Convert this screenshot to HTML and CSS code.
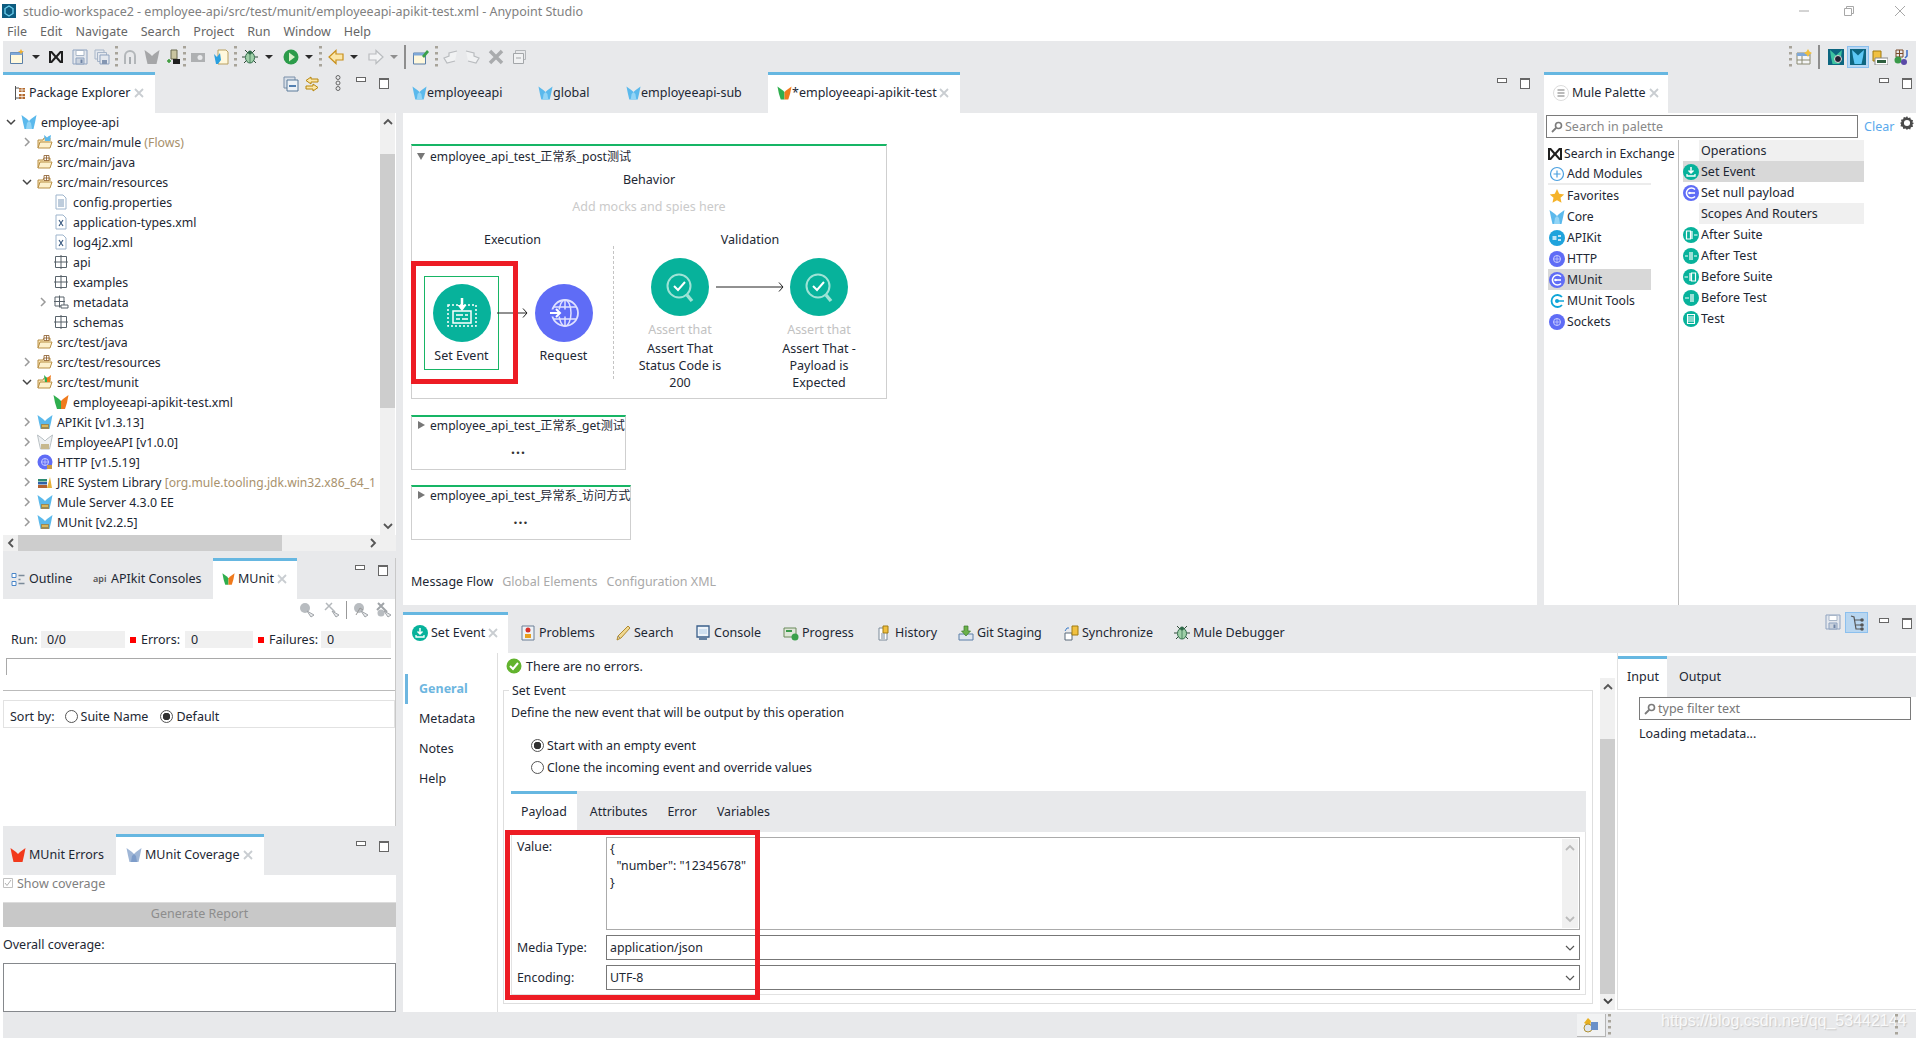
FILE: index.html

```html
<!DOCTYPE html>
<html lang="en">
  <head>
    <meta charset="UTF-8" />
    <meta name="viewport" content="width=device-width, initial-scale=1.0" />
    <title>Anypoint Studio</title>
    <link rel="stylesheet" href="styles.css">
  </head>
  <body>
    <!-- shared icons -->
    <svg class="sprite" xmlns="http://www.w3.org/2000/svg">
      <symbol id="mule" viewBox="0 0 16 16"><path d="M.5 1l5.500 4 2 2 2-2 5.500-4-1.500 7.500-1.500 6.500h-9L2 8.500z" fill="#5bb9ec"/><path d="M5 15l1-6 2-2 2 2 1 6z" fill="#93d5f6"/></symbol>
      <symbol id="mule-lib" viewBox="0 0 16 16"><path d="M.5 1l5.500 4 2 2 2-2 5.500-4-1.500 7.500-1.500 6.500h-9L2 8.500z" fill="#5bb9ec"/><path d="M4 10h8v5H4z" fill="#9c8a56"/><path d="M5 11h6v2H5z" fill="#d9b75a"/></symbol>
      <symbol id="mule-pale" viewBox="0 0 16 16"><path d="M.5 1l5.500 4 2 2 2-2 5.500-4-1.500 7.500-1.500 6.500h-9L2 8.500z" fill="#eef0f2" stroke="#a9b2b8" stroke-width=".8"/><path d="M4 10h8v5H4z" fill="#c7b88e"/></symbol>
      <symbol id="mule-cov" viewBox="0 0 16 16"><path d="M.5 1l5.500 4 2 2 2-2 5.500-4-1.500 7.500-1.500 6.500h-9L2 8.500z" fill="#9fb6d6"/><path d="M5 15l1-6 2-2 2 2 1 6z" fill="#7d9cc9"/></symbol>
      <symbol id="mule-red" viewBox="0 0 16 16"><path d="M.5 1l5.500 4 2 2 2-2 5.500-4-1.500 7.500-1.500 6.500h-9L2 8.500z" fill="#f23a1c"/></symbol>
      <symbol id="mule-gray" viewBox="0 0 16 16"><path d="M.5 1l5.500 4 2 2 2-2 5.500-4-1.500 7.500-1.500 6.500h-9L2 8.500z" fill="#a5a6a8"/></symbol>
      <symbol id="munit" viewBox="0 0 16 16"><path d="M.5 1l5.500 4 2 2v8H4L2 8.500z" fill="#2fae4e"/><path d="M15.500 1l-5.500 4-2 2v8h4l2-6.500z" fill="#f07a1c"/></symbol>
      <symbol id="x" viewBox="0 0 10 10"><path d="M1 1l8 8M9 1l-8 8" stroke="#c9cdd1" stroke-width="1.800" fill="none"/></symbol>
      <symbol id="arrow-r" viewBox="0 0 10 10"><path d="M3 1l4 4-4 4" stroke="#9a9a9a" stroke-width="1.500" fill="none"/></symbol>
      <symbol id="arrow-d" viewBox="0 0 10 10"><path d="M1 3l4 4 4-4" stroke="#444" stroke-width="1.500" fill="none"/></symbol>
      <symbol id="folder-pkg" viewBox="0 0 16 16"><path d="M1 14V6h5l1-2h6v3" fill="#fbe7b8" stroke="#b88f45"/><path d="M1 14l2-6h12l-2 6z" fill="#fdf0cc" stroke="#b88f45"/><path d="M7 1.500h5v5H7zM9.500 1.500v5M7 4h5" fill="#fff" stroke="#8a5a2a" stroke-width=".8"/></symbol>
      <symbol id="folder-mule" viewBox="0 0 16 16"><path d="M1 14V6h5l1-2h6v3" fill="#fbe7b8" stroke="#b88f45"/><path d="M1 14l2-6h12l-2 6z" fill="#fdf0cc" stroke="#b88f45"/><path d="M7 1l2 1.500L10 4l1-1.500L14 1l-1 6H8z" fill="#5bb9ec"/></symbol>
      <symbol id="folder-munit" viewBox="0 0 16 16"><path d="M1 14V6h5l1-2h6v3" fill="#fbe7b8" stroke="#b88f45"/><path d="M1 14l2-6h12l-2 6z" fill="#fdf0cc" stroke="#b88f45"/><path d="M7 1l3 3v4H8z" fill="#2fae4e"/><path d="M14 1l-4 3v4h3z" fill="#f07a1c"/></symbol>
      <symbol id="doc" viewBox="0 0 16 16"><path d="M3 1h7l3 3v11H3z" fill="#fff" stroke="#9db4cc"/><path d="M5 6h6M5 8h6M5 10h6M5 12h6" stroke="#7c99b8"/></symbol>
      <symbol id="xml" viewBox="0 0 16 16"><path d="M3 1h7l3 3v11H3z" fill="#fff" stroke="#9db4cc"/><path d="M6 6l4 6M10 6l-4 6" stroke="#3a5a80" stroke-width="1.200"/></symbol>
      <symbol id="pkg" viewBox="0 0 16 16"><path d="M2.500 2.500h11v11h-11zM8 1v14M1 8h14" fill="none" stroke="#59636b"/></symbol>
      <symbol id="pkg-more" viewBox="0 0 16 16"><path d="M2 3h9v9H2zM6.500 1.500v12M1 7.500h11" fill="none" stroke="#59636b"/><path d="M8 11h7v3H8z" fill="#fff" stroke="#59636b"/></symbol>
      <symbol id="http" viewBox="0 0 16 16"><circle cx="8" cy="8" r="7.500" fill="#5f6cf6"/><circle cx="8" cy="8" r="3.500" fill="none" stroke="#c8ccff"/><path d="M8 4.500v7M4.500 8h7" stroke="#c8ccff" stroke-width=".8"/><path d="M10 11h5v4h-5z" fill="#c79a4a"/></symbol>
      <symbol id="jre" viewBox="0 0 16 16"><path d="M1 5h9v2.500H1z" fill="#2c8a72"/><path d="M1 8h9v2.500H1z" fill="#3161a8"/><path d="M1 11h9v3H1z" fill="#b3602e"/><path d="M10 14l3-11 2 11z" fill="#e8b23a"/></symbol>
      <symbol id="outline" viewBox="0 0 14 16"><path d="M.5 2.500h4v4h-4zM.5 10.500h4v4h-4z" fill="#fff" stroke="#4a86c8"/><path d="M7 4.500h6M7 8.500h2M7 12.500h6" stroke="#7a8a99" stroke-width="1.300"/></symbol>
      <symbol id="pkg-view" viewBox="0 0 12 16"><path d="M1.500 1v14M1.500 3H5M1.500 13H5" stroke="#555" fill="none"/><path d="M5 3h6v4H5zM5 9h6v5H5z" fill="#b36a2e"/><path d="M8 3v11M5 5h6M5 11.500h6" stroke="#fff" stroke-width=".7"/></symbol>
      <symbol id="bug" viewBox="0 0 16 16"><path d="M3 1l3 3M13 1l-3 3M0 8h3M13 8h3M2 14l3-3M14 14l-3-3" stroke="#2f4a38"/><ellipse cx="8" cy="8.500" rx="4.500" ry="5.500" fill="#9fd0a8" stroke="#2f6a48"/><path d="M8 3.500v10" stroke="#2f6a48" stroke-width=".7"/><circle cx="8" cy="3.500" r="2" fill="#2f6a48"/></symbol>
      <symbol id="save" viewBox="0 0 16 16"><path d="M1 1h14v14H1z" fill="#e4e8ee" stroke="#8fa3c0"/><path d="M4 1.500h8v5H4z" fill="#fff" stroke="#a8b6c8"/><path d="M4 9h8v6H4z" fill="#cbd3de" stroke="#8fa3c0"/><path d="M8.500 10.500h2V14h-2z" fill="#6f84a6"/></symbol>
      <symbol id="saveall" viewBox="0 0 16 16"><path d="M1 1h9v9H1z" fill="#e4e8ee" stroke="#a7b5c8"/><path d="M3.500 3.500h9v9h-9z" fill="#e4e8ee" stroke="#a7b5c8"/><path d="M6 6h9v9H6z" fill="#e4e8ee" stroke="#8fa3c0"/><path d="M8 11h5v4H8z" fill="#8496b2"/></symbol>
      <symbol id="dots" viewBox="0 0 3 24"><path d="M0 1h3v2.500H0zM0 7h3v2.500H0zM0 13h3v2.500H0zM0 19h3v2.500H0z" fill="#a8a49a"/></symbol>
      <symbol id="exchange" viewBox="0 0 16 16"><path d="M1 2l3 0 4 4.500L12 2h3v12h-3L8 9.500 4 14H1zM3 4v8l3.500-4zM13 4l-3.500 4 3.500 4z" fill="#1f1f1f"/></symbol>
      <symbol id="drop" viewBox="0 0 8 4"><path d="M0 0h8L4 4z" fill="#2b2b2b"/></symbol>
      <symbol id="drop-g" viewBox="0 0 8 4"><path d="M0 0h8L4 4z" fill="#8f8f8f"/></symbol>
      <symbol id="search" viewBox="0 0 12 12"><circle cx="7.500" cy="4.500" r="3" fill="none" stroke="#7b7b7b" stroke-width="1.600"/><path d="M5 7l-4 4" stroke="#7b7b7b" stroke-width="1.800"/></symbol>
      <symbol id="set-event" viewBox="0 0 16 16"><circle cx="8" cy="8" r="8" fill="#07b29b"/><path d="M8 3v6M5.500 6.500L8 9l2.500-2.500" stroke="#fff" stroke-width="1.500" fill="none"/><path d="M4 10v2h8v-2" stroke="#fff" stroke-width="1.300" fill="none"/></symbol>
      <symbol id="munit-c" viewBox="0 0 16 16"><circle cx="8" cy="8" r="8" fill="#5f6cf6"/><path d="M12 4.500a5 5 0 1 0 0 7" stroke="#fff" stroke-width="1.600" fill="none"/><path d="M6 8h6" stroke="#fff" stroke-width="1.600"/><circle cx="6.500" cy="8" r="1.300" fill="#fff"/></symbol>
      <symbol id="after-suite" viewBox="0 0 16 16"><circle cx="8" cy="8" r="8" fill="#07b29b"/><path d="M3.500 4h4v8h-4zM9 4v8M11 8h3.500" fill="none" stroke="#fff" stroke-width="1.200"/></symbol>
      <symbol id="after-test" viewBox="0 0 16 16"><circle cx="8" cy="8" r="8" fill="#07b29b"/><path d="M7 4v8M9 4v8M11 8h3M2 8h3" fill="none" stroke="#fff" stroke-width="1.200"/></symbol>
      <symbol id="before-suite" viewBox="0 0 16 16"><circle cx="8" cy="8" r="8" fill="#07b29b"/><path d="M8.500 4h4v8h-4zM7 4v8M1.500 8H5" fill="none" stroke="#fff" stroke-width="1.200"/></symbol>
      <symbol id="before-test" viewBox="0 0 16 16"><circle cx="8" cy="8" r="8" fill="#07b29b"/><path d="M8 4v8M10 4v8M2 8h4" fill="none" stroke="#fff" stroke-width="1.200"/></symbol>
      <symbol id="test" viewBox="0 0 16 16"><circle cx="8" cy="8" r="8" fill="#07b29b"/><path d="M4.500 3.500h7v9h-7zM4.500 6h7M4.500 8h7M4.500 10h7" fill="none" stroke="#fff" stroke-width="1.100"/></symbol>
      <symbol id="apikit" viewBox="0 0 16 16"><circle cx="8" cy="8" r="8" fill="#1fa3dc"/><path d="M3.500 6h4v4h-4zM9 5h3v2H9zM9 9h3v2H9z" fill="#bfe5f7"/></symbol>
      <symbol id="http-c" viewBox="0 0 16 16"><circle cx="8" cy="8" r="8" fill="#5f6cf6"/><circle cx="8" cy="8" r="3.500" fill="none" stroke="#c8ccff"/><path d="M8 4.500v7M4.500 8h7" stroke="#c8ccff" stroke-width=".8"/></symbol>
      <symbol id="tools" viewBox="0 0 16 16"><path d="M13 4a6 6 0 1 0 0 8" stroke="#0ea5d8" stroke-width="1.800" fill="none"/><circle cx="8" cy="8" r="2" fill="#0ea5d8"/><path d="M8 8h7" stroke="#0ea5d8" stroke-width="1.500"/></symbol>
      <symbol id="plus" viewBox="0 0 16 16"><circle cx="8" cy="8" r="6.500" fill="#fff" stroke="#4aa0e0" stroke-width="1.200"/><path d="M8 4.500v7M4.500 8h7" stroke="#4aa0e0" stroke-width="1.200"/></symbol>
      <symbol id="star" viewBox="0 0 16 16"><path d="M8 1l2.200 4.800 5 .6-3.700 3.400 1 5L8 12.300 3.500 14.800l1-5L.800 6.400l5-.6z" fill="#f5b32a"/></symbol>
      <symbol id="check-ok" viewBox="0 0 16 16"><circle cx="8" cy="8" r="7.500" fill="#62b32e"/><path d="M4 8l3 3 5-6" stroke="#fff" stroke-width="2" fill="none"/></symbol>
    </svg>

    <div class="titlebar">
      <svg class="app-logo" viewBox="0 0 14 14"><path d="M0 0h14v14H0z" fill="#0d5c80"/><path d="M7 2l4 2.500v5L7 12 3 9.500v-5z" fill="none" stroke="#6dd0ee" stroke-width="1.300"/></svg>
      <span>studio-workspace2 - employee-api/src/test/munit/employeeapi-apikit-test.xml - Anypoint Studio</span>
      <div class="win-btns">
        <svg viewBox="0 0 10 10"><path d="M0 5h10" stroke="#a8a8a8"/></svg>
        <svg viewBox="0 0 10 10"><path d="M.5 2.500h7v7h-7zM2.500 2.500V.5h7v7H7.500" fill="none" stroke="#a8a8a8"/></svg>
        <svg viewBox="0 0 10 10"><path d="M0 0l10 10M10 0L0 10" stroke="#a8a8a8"/></svg>
      </div>
    </div>

    <div class="menubar">
      <span>File</span><span>Edit</span><span>Navigate</span><span>Search</span><span>Project</span><span>Run</span><span>Window</span><span>Help</span>
    </div>

    <div class="toolbar">
      <svg class="ti"><path d="M1.500 3.500h12v11h-12z" fill="#fff8dc" stroke="#5a7fa8"/><path d="M1.500 3.500h12v2.500h-12z" fill="#7fa8d8"/><path d="M12 0l1 2 2 .5-2 1-1 2-1-2-2-1 2-.5z" fill="#f0b030"/></svg>
      <svg class="td m7"><use href="#drop"/></svg>
      <svg class="ti m8"><use href="#exchange"/></svg>
      <svg class="ti m8"><use href="#save"/></svg>
      <svg class="ti"><use href="#saveall"/></svg>
      <svg class="tdots m5"><use href="#dots"/></svg>
      <svg class="ti m4"><path d="M2 15V7a6 6 0 0 1 12 0v8h-2V7a4 4 0 0 0-8 0v8z" fill="#b3b7ba"/><path d="M7 8h2v7H7z" fill="#a7acb0"/></svg>
      <svg class="ti"><use href="#mule-gray"/></svg>
      <svg class="ti"><path d="M5 1h6v9H5z" fill="#c9c4a0" stroke="#6a6a50"/><path d="M7 10h7v5H7z" fill="#202020"/><path d="M1 12h4M3 10v4" stroke="#3a9a3a" stroke-width="1.500"/></svg>
      <svg class="tdots m1"><use href="#dots"/></svg>
      <svg class="ti m4"><path d="M1 4h14v9H1z" fill="#aeb0b2"/><circle cx="10" cy="8.500" r="2.500" fill="#e8e9eb"/></svg>
      <svg class="ti m7"><path d="M5 1h8l2 2v12H5z" fill="#fff8dc" stroke="#b8a060"/><path d="M1 5l3 3 3-4 1 7-3 4H3z" fill="#2aa0e0"/></svg>
      <svg class="tdots m5"><use href="#dots"/></svg>
      <svg class="ti m5"><use href="#bug"/></svg>
      <svg class="td m7"><use href="#drop"/></svg>
      <svg class="ti m10"><circle cx="8" cy="8" r="7.500" fill="#2c9c4a"/><path d="M6 3.500L12 8l-6 4.500z" fill="#d8f0c8"/></svg>
      <svg class="td"><use href="#drop"/></svg>
      <svg class="tdots"><use href="#dots"/></svg>
      <svg class="ti"><path d="M8 1.500L1 8l7 6.500V11h7V5H8z" fill="#fbe6a8" stroke="#c8901c" stroke-width="1.200"/></svg>
      <svg class="td"><use href="#drop"/></svg>
      <svg class="ti m10"><path d="M8 1.500L15 8l-7 6.500V11H1V5h7z" fill="#f2f3f4" stroke="#b9bcbf" stroke-width="1.200"/></svg>
      <svg class="td"><use href="#drop-g"/></svg>
      <div class="tsep"></div>
      <svg class="ti m7"><path d="M.5 4h12v11H.5z" fill="#fff8dc" stroke="#5a7fa8"/><path d="M.5 4h12v2.500H.5z" fill="#7fa8d8"/><path d="M9 7l5-6 2 2-5 6z" fill="#3aa04a"/></svg>
      <svg class="tdots"><use href="#dots"/></svg>
      <svg class="ti m5"><path d="M14 2L6 4v3L1 9l3 5 8-2" fill="#f1f2f3" stroke="#b9bcbf" stroke-width="1.200"/></svg>
      <svg class="ti m5"><path d="M2 2l8 2v3l5 2-3 5-8-2" fill="#f1f2f3" stroke="#b9bcbf" stroke-width="1.200"/></svg>
      <svg class="ti m8"><path d="M2 2l12 12M14 2L2 14" stroke="#a9abad" stroke-width="3.500"/></svg>
      <svg class="ti m8"><path d="M3.500 1.500h10v9h-10z" fill="none" stroke="#b3b6b9"/><path d="M1.500 4.500h10v10h-10z" fill="#f1f2f3" stroke="#a3a6a9"/><path d="M4 9h5" stroke="#a3a6a9"/></svg>
      <div class="toolbar-right">
        <svg class="tdots"><use href="#dots"/></svg>
        <svg class="ti m4"><path d="M1 4h13v11H1z" fill="#f5f6f7" stroke="#8a8a72"/><path d="M1 4h13v3H1z" fill="#7fa8d8"/><path d="M6 7v8M1 11h13" stroke="#8a8a72"/><path d="M12 0l1.500 2.500L16 4l-2.500 1.500L12 8l-1.500-2.500L8 4l2.500-1.500z" fill="#f0c040"/></svg>
        <div class="tsep tsep-r"></div>
        <div class="persp"><svg class="ti"><path d="M0 0h16v16H0z" fill="#0d6680"/><path d="M2 1l4 3.500 2 2 2-2 4-3.500-1 7-1.500 7h-7L3 8z" fill="#3dc3a0"/><circle cx="10" cy="10" r="3.500" fill="#223" stroke="#ddd"/></svg></div>
        <div class="persp persp-on"><svg class="ti"><path d="M0 0h16v16H0z" fill="#0d6680"/><path d="M2 1l4 3.500 2 2 2-2 4-3.500-1 7-1.500 7h-7L3 8z" fill="#5cc8f5"/></svg></div>
        <div class="persp"><svg class="ti"><path d="M1 2h8v10H1z" fill="#f0c040" stroke="#a07a10"/><path d="M3 9h13v7H3z" fill="#fff" stroke="#888"/><path d="M5 11h9v3H5z" fill="#2f5f3f"/></svg></div>
        <div class="persp"><svg class="ti"><path d="M2 1h7v7H2zM5.500 1v7M2 4.500h7" fill="none" stroke="#7a4a2a"/><circle cx="4" cy="11" r="3.500" fill="#3a9a4a"/><circle cx="10" cy="13" r="3" fill="#5a4aa8"/><path d="M13 1v6l-2 2" stroke="#3a6ac8" fill="none" stroke-width="1.500"/></svg></div>
      </div>
    </div>

    <div class="workbench">
      <div class="col-left">
        <section class="view view-pkg">
          <div class="tabbar">
            <div class="tab active tab-pkg"><svg class="i-pv"><use href="#pkg-view"/></svg><span>Package Explorer</span><svg class="close"><use href="#x"/></svg></div>
            <div class="view-ctl ctl-pkg">
              <svg class="ti"><path d="M1 1h11v11H1z" fill="#d8dfe8" stroke="#7a8fa8"/><path d="M4 4h11v11H4z" fill="#eef2f6" stroke="#5a7a9a"/><path d="M6 10h7" stroke="#1f5a9a" stroke-width="1.500"/></svg>
              <svg class="ti"><path d="M7 1L2 4.500 7 8V6h7V3H7z" fill="#fbe6a8" stroke="#b8860b"/><path d="M9 8l5 3.500L9 15v-2H2v-3h7z" fill="#fbe6a8" stroke="#b8860b"/></svg>
              <svg class="tdots-v" viewBox="0 0 6 16"><circle cx="3" cy="2.500" r="2" fill="none" stroke="#666"/><circle cx="3" cy="8" r="2" fill="none" stroke="#666"/><circle cx="3" cy="13.500" r="2" fill="none" stroke="#666"/></svg>
              <div class="btn-min"></div><div class="btn-max"></div>
            </div>
          </div>
          <div class="tree-wrap">
            <div class="tree">
              <div class="row lv0"><svg class="arr"><use href="#arrow-d"/></svg><svg class="ic"><use href="#mule"/></svg><span>employee-api</span></div>
              <div class="row lv1"><svg class="arr"><use href="#arrow-r"/></svg><svg class="ic"><use href="#folder-mule"/></svg><span>src/main/mule <em>(Flows)</em></span></div>
              <div class="row lv1"><i class="arr"></i><svg class="ic"><use href="#folder-pkg"/></svg><span>src/main/java</span></div>
              <div class="row lv1"><svg class="arr"><use href="#arrow-d"/></svg><svg class="ic"><use href="#folder-pkg"/></svg><span>src/main/resources</span></div>
              <div class="row lv2"><i class="arr"></i><svg class="ic"><use href="#doc"/></svg><span>config.properties</span></div>
              <div class="row lv2"><i class="arr"></i><svg class="ic"><use href="#xml"/></svg><span>application-types.xml</span></div>
              <div class="row lv2"><i class="arr"></i><svg class="ic"><use href="#xml"/></svg><span>log4j2.xml</span></div>
              <div class="row lv2"><i class="arr"></i><svg class="ic"><use href="#pkg"/></svg><span>api</span></div>
              <div class="row lv2"><i class="arr"></i><svg class="ic"><use href="#pkg"/></svg><span>examples</span></div>
              <div class="row lv2"><svg class="arr"><use href="#arrow-r"/></svg><svg class="ic"><use href="#pkg-more"/></svg><span>metadata</span></div>
              <div class="row lv2"><i class="arr"></i><svg class="ic"><use href="#pkg"/></svg><span>schemas</span></div>
              <div class="row lv1"><i class="arr"></i><svg class="ic"><use href="#folder-pkg"/></svg><span>src/test/java</span></div>
              <div class="row lv1"><svg class="arr"><use href="#arrow-r"/></svg><svg class="ic"><use href="#folder-pkg"/></svg><span>src/test/resources</span></div>
              <div class="row lv1"><svg class="arr"><use href="#arrow-d"/></svg><svg class="ic"><use href="#folder-munit"/></svg><span>src/test/munit</span></div>
              <div class="row lv2"><i class="arr"></i><svg class="ic"><use href="#munit"/></svg><span>employeeapi-apikit-test.xml</span></div>
              <div class="row lv1"><svg class="arr"><use href="#arrow-r"/></svg><svg class="ic"><use href="#mule-lib"/></svg><span>APIKit [v1.3.13]</span></div>
              <div class="row lv1"><svg class="arr"><use href="#arrow-r"/></svg><svg class="ic"><use href="#mule-pale"/></svg><span>EmployeeAPI [v1.0.0]</span></div>
              <div class="row lv1"><svg class="arr"><use href="#arrow-r"/></svg><svg class="ic"><use href="#http"/></svg><span>HTTP [v1.5.19]</span></div>
              <div class="row lv1"><svg class="arr"><use href="#arrow-r"/></svg><svg class="ic"><use href="#jre"/></svg><span class="jre-label">JRE System Library <em>[org.mule.tooling.jdk.win32.x86_64_1</em></span></div>
              <div class="row lv1"><svg class="arr"><use href="#arrow-r"/></svg><svg class="ic"><use href="#mule-lib"/></svg><span>Mule Server 4.3.0 EE</span></div>
              <div class="row lv1"><svg class="arr"><use href="#arrow-r"/></svg><svg class="ic"><use href="#mule-lib"/></svg><span>MUnit [v2.2.5]</span></div>
            </div>
            <div class="vscroll">
              <svg class="sb-arrow"><path d="M2 7l4-4 4 4" stroke="#555" stroke-width="1.800" fill="none"/></svg>
              <div class="sb-thumb sb-thumb-tree"></div>
              <svg class="sb-arrow sb-end"><path d="M2 3l4 4 4-4" stroke="#555" stroke-width="1.800" fill="none"/></svg>
            </div>
          </div>
          <div class="hscroll">
            <svg class="sb-h-arrow"><path d="M7 2L3 6l4 4" stroke="#555" stroke-width="1.800" fill="none"/></svg>
            <div class="sb-thumb-h"></div>
            <svg class="sb-h-arrow sb-h-end"><path d="M5 2l4 4-4 4" stroke="#555" stroke-width="1.800" fill="none"/></svg>
          </div>
        </section>

        <section class="view view-munit">
          <div class="tabbar">
            <div class="tab tab-outline"><svg class="i-14"><use href="#outline"/></svg><span>Outline</span></div>
            <div class="tab tab-apikit"><span class="api-mini">api</span><span>APIkit Consoles</span></div>
            <div class="tab active tab-munit"><svg class="i-13"><use href="#munit"/></svg><span>MUnit</span><svg class="close"><use href="#x"/></svg></div>
            <div class="view-ctl ctl-low"><div class="btn-min"></div><div class="btn-max"></div></div>
          </div>
          <div class="munit-tools">
            <svg class="ti"><circle cx="6" cy="6" r="5" fill="#b8bcc0"/><path d="M8 9l7 4-3 2z" fill="#e8eaec" stroke="#a0a4a8"/></svg>
            <svg class="ti m9"><path d="M2 1l9 9M8 1L1 8" stroke="#b4b8bc" stroke-width="1.500"/><path d="M8 9l7 4-3 2z" fill="#e8eaec" stroke="#a0a4a8"/></svg>
            <div class="tool-sep"></div>
            <svg class="ti"><circle cx="6" cy="6" r="5" fill="#b8bcc0"/><path d="M3 13l4-7 3 2" fill="none" stroke="#999"/><path d="M8 9l7 4-3 2z" fill="#e8eaec" stroke="#a0a4a8"/></svg>
            <svg class="ti m7"><path d="M2 1l9 9M8 1L1 8" stroke="#a0a4a8" stroke-width="2"/><circle cx="5" cy="11" r="3.500" fill="#b8bcc0"/><path d="M8 9l7 4-3 2z" fill="#e8eaec" stroke="#a0a4a8"/></svg>
          </div>
          <div class="run-row">
            <span class="lbl-run">Run:</span><span class="run-field f-run">0/0</span>
            <i class="red-sq"></i><span class="lbl-err">Errors:</span><span class="run-field f-err">0</span>
            <i class="red-sq"></i><span class="lbl-fail">Failures:</span><span class="run-field f-fail">0</span>
          </div>
          <div class="progress"></div>
          <div class="sort-line"></div>
          <div class="sort-box">
            <span>Sort by:</span>
            <i class="radio r-first"></i><span>Suite Name</span>
            <i class="radio on r-second"></i><span>Default</span>
          </div>
        </section>

        <section class="view view-cov">
          <div class="tabbar">
            <div class="tab tab-errors"><svg class="ic"><use href="#mule-red"/></svg><span>MUnit Errors</span></div>
            <div class="tab active tab-cov"><svg class="ic"><use href="#mule-cov"/></svg><span>MUnit Coverage</span><svg class="close"><use href="#x"/></svg></div>
            <div class="view-ctl ctl-low"><div class="btn-min"></div><div class="btn-max"></div></div>
          </div>
          <div class="show-cov"><svg class="cb" viewBox="0 0 10 10"><path d="M.5.5h9v9h-9z" fill="#fff" stroke="#c0c0c0"/><path d="M2 5l2 2.500L8 2" stroke="#b0b0b0" fill="none"/></svg><span>Show coverage</span></div>
          <div class="gen-btn">Generate Report</div>
          <div class="overall">Overall coverage:</div>
          <div class="cov-box"></div>
        </section>
      </div>

      <div class="col-main">
        <div class="main-top">
          <section class="view view-editor">
            <div class="tabbar">
              <div class="tab ed-1"><svg class="i-14"><use href="#mule"/></svg><span>employeeapi</span></div>
              <div class="tab ed-2"><svg class="i-14"><use href="#mule"/></svg><span>global</span></div>
              <div class="tab ed-3"><svg class="i-14"><use href="#mule"/></svg><span>employeeapi-sub</span></div>
              <div class="tab active ed-4"><svg class="i-14"><use href="#munit"/></svg><span>*employeeapi-apikit-test</span><svg class="close"><use href="#x"/></svg></div>
              <div class="view-ctl"><div class="btn-min"></div><div class="btn-max"></div></div>
            </div>
            <div class="canvas">
              <div class="flow flow-main">
                <div class="flow-title"><svg class="tri" viewBox="0 0 8 8"><path d="M0 1h8L4 8z" fill="#777"/></svg><span>employee_api_test_正常系_post测试</span></div>
                <div class="behavior">Behavior</div>
                <div class="mocks">Add mocks and spies here</div>
                <div class="lanes">
                  <div class="lane">
                    <div class="lane-name">Execution</div>
                    <div class="lane-body exec">
                      <div class="node selected">
                        <svg class="circle" viewBox="0 0 58 58"><circle cx="29" cy="29" r="29" fill="#07b29b"/><path d="M15 21h28v21H15z" fill="none" stroke="#fff" stroke-width="1.500" stroke-dasharray="2 2"/><path d="M20 27h18v12H20z" fill="none" stroke="#fff" stroke-width="1.500"/><path d="M23 31h7M32 31h3M23 35h4M29 35h6" stroke="#fff" stroke-width="1.300"/><path d="M29 14v11" stroke="#fff" stroke-width="2.500"/><path d="M24.500 21h9L29 27z" fill="#fff"/></svg>
                        <div class="node-name">Set Event</div>
                      </div>
                      <svg class="flow-arrow short" viewBox="0 0 31 10"><path d="M0 5h30M26 .5l4 4.500-4 4.500" fill="none" stroke="#222"/></svg>
                      <div class="node">
                        <svg class="circle" viewBox="0 0 58 58"><circle cx="29" cy="29" r="29" fill="#5f6cf6"/><circle cx="30" cy="29" r="13" fill="none" stroke="#dfe1ff" stroke-width="1.800"/><ellipse cx="30" cy="29" rx="6" ry="13" fill="none" stroke="#dfe1ff" stroke-width="1.500"/><path d="M30 16v26M18 23h24M18 35h24" stroke="#dfe1ff" stroke-width="1.500"/><path d="M14 25.500h18v7H14z" fill="#5f6cf6"/><path d="M15 29h9M21 25l4 4-4 4" fill="none" stroke="#fff" stroke-width="2"/></svg>
                        <div class="node-name">Request</div>
                      </div>
                    </div>
                  </div>
                  <div class="lane-divider"></div>
                  <div class="lane">
                    <div class="lane-name">Validation</div>
                    <div class="lane-body valid">
                      <div class="node-assert">
                        <svg class="circle" viewBox="0 0 58 58"><circle cx="29" cy="29" r="29" fill="#07b29b"/><circle cx="28" cy="28" r="11.500" fill="none" stroke="#9fe3d6" stroke-width="2"/><path d="M36 37l5 6" stroke="#9fe3d6" stroke-width="3.500"/><path d="M23 28l4 4 7-8" fill="none" stroke="#fff" stroke-width="2"/></svg>
                        <div class="assert-type">Assert that</div>
                        <div class="assert-name">Assert That Status Code is 200</div>
                      </div>
                      <svg class="flow-arrow long" viewBox="0 0 68 10"><path d="M0 5h67M63 .5l4 4.500-4 4.500" fill="none" stroke="#222"/></svg>
                      <div class="node-assert">
                        <svg class="circle" viewBox="0 0 58 58"><circle cx="29" cy="29" r="29" fill="#07b29b"/><circle cx="28" cy="28" r="11.500" fill="none" stroke="#9fe3d6" stroke-width="2"/><path d="M36 37l5 6" stroke="#9fe3d6" stroke-width="3.500"/><path d="M23 28l4 4 7-8" fill="none" stroke="#fff" stroke-width="2"/></svg>
                        <div class="assert-type">Assert that</div>
                        <div class="assert-name">Assert That - Payload is Expected</div>
                      </div>
                    </div>
                  </div>
                </div>
                <div class="red-mark mark-node"></div>
              </div>
              <div class="flow flow-small flow-get">
                <div class="flow-title short"><svg class="tri" viewBox="0 0 8 8"><path d="M1 0l7 4-7 4z" fill="#777"/></svg><span>employee_api_test_正常系_get测试</span></div>
                <div class="flow-dots">...</div>
              </div>
              <div class="flow flow-small flow-err">
                <div class="flow-title short"><svg class="tri" viewBox="0 0 8 8"><path d="M1 0l7 4-7 4z" fill="#777"/></svg><span>employee_api_test_异常系_访问方式</span></div>
                <div class="flow-dots">...</div>
              </div>
              <div class="canvas-tabs"><span class="on">Message Flow</span><span>Global Elements</span><span>Configuration XML</span></div>
            </div>
          </section>

          <section class="view view-palette">
            <div class="tabbar">
              <div class="tab active tab-pal"><svg class="ic" viewBox="0 0 16 16"><circle cx="8" cy="8" r="7.500" fill="#fff" stroke="#dcdcdc"/><path d="M4.500 5h7M4.500 8h7M4.500 11h7" stroke="#777"/></svg><span>Mule Palette</span><svg class="close"><use href="#x"/></svg></div>
              <div class="view-ctl ctl-pal"><div class="btn-min"></div><div class="btn-max"></div></div>
            </div>
            <div class="pal-search">
              <div class="search-box"><svg class="i-12"><use href="#search"/></svg><span>Search in palette</span></div>
              <span class="clear">Clear</span>
              <svg class="gear" viewBox="0 0 16 16"><path d="M8 0l1.200 2.300 2.500-.7.700 2.500 2.500.7-.7 2.500L16 8l-1.800 1.700.7 2.500-2.500.7-.7 2.500-2.500-.7L8 16l-1.700-1.800-2.500.7-.7-2.500-2.500-.7.7-2.500L0 8l1.800-1.200-.7-2.500 2.500-.7.7-2.500 2.500.7z" fill="#4a4a4a"/><circle cx="8" cy="8" r="3.500" fill="#fff"/></svg>
            </div>
            <div class="pal-lists">
              <div class="pal-left">
                <div class="pal-row row-ex"><svg class="ic"><use href="#exchange"/></svg><span>Search in Exchange</span></div>
                <div class="pal-row row-add"><svg class="ic"><use href="#plus"/></svg><span>Add Modules</span></div>
                <div class="pal-row"><svg class="ic"><use href="#star"/></svg><span>Favorites</span></div>
                <div class="pal-row"><svg class="ic"><use href="#mule"/></svg><span>Core</span></div>
                <div class="pal-row"><svg class="ic"><use href="#apikit"/></svg><span>APIKit</span></div>
                <div class="pal-row"><svg class="ic"><use href="#http-c"/></svg><span>HTTP</span></div>
                <div class="pal-row sel"><svg class="ic"><use href="#munit-c"/></svg><span>MUnit</span></div>
                <div class="pal-row"><svg class="ic"><use href="#tools"/></svg><span>MUnit Tools</span></div>
                <div class="pal-row"><svg class="ic"><use href="#http-c"/></svg><span>Sockets</span></div>
              </div>
              <div class="pal-right">
                <div class="pal-head">Operations</div>
                <div class="pal-op sel"><svg class="ic"><use href="#set-event"/></svg><span>Set Event</span></div>
                <div class="pal-op"><svg class="ic"><use href="#munit-c"/></svg><span>Set null payload</span></div>
                <div class="pal-head">Scopes And Routers</div>
                <div class="pal-op"><svg class="ic"><use href="#after-suite"/></svg><span>After Suite</span></div>
                <div class="pal-op"><svg class="ic"><use href="#after-test"/></svg><span>After Test</span></div>
                <div class="pal-op"><svg class="ic"><use href="#before-suite"/></svg><span>Before Suite</span></div>
                <div class="pal-op"><svg class="ic"><use href="#before-test"/></svg><span>Before Test</span></div>
                <div class="pal-op"><svg class="ic"><use href="#test"/></svg><span>Test</span></div>
              </div>
            </div>
          </section>
        </div>

        <section class="view view-props">
          <div class="tabbar">
            <div class="tab active tab-se"><svg class="ic"><use href="#set-event"/></svg><span>Set Event</span><svg class="close"><use href="#x"/></svg></div>
            <div class="tab b-problems"><svg class="ic" viewBox="0 0 16 16"><path d="M2 1h12v14H2z" fill="#eef2f6" stroke="#6a7f96"/><circle cx="8" cy="5" r="2.500" fill="#d8322a"/><path d="M5 9h6v4H5z" fill="#e8a020"/></svg><span>Problems</span></div>
            <div class="tab b-search"><svg class="ic" viewBox="0 0 16 16"><path d="M13 1l2 2-9 10-4 2 1-4z" fill="#f0d890" stroke="#b08a30"/><path d="M3 11l2 2" stroke="#888"/></svg><span>Search</span></div>
            <div class="tab b-console"><svg class="ic" viewBox="0 0 16 16"><path d="M2 1h12v11H2z" fill="#eef4fa" stroke="#3a5f8a" stroke-width="1.300"/><path d="M4 4h8v5H4z" fill="#cfe0f0"/><path d="M4 14h8" stroke="#3a5f8a" stroke-width="1.500"/></svg><span>Console</span></div>
            <div class="tab b-progress"><svg class="ic" viewBox="0 0 16 16"><path d="M1 3h12v9H1z" fill="#dfe6d8" stroke="#6a8a5a"/><path d="M3 5h6v2H3z" fill="#3a9a4a"/><circle cx="12" cy="12" r="3.500" fill="#3aa04a"/></svg><span>Progress</span></div>
            <div class="tab b-history"><svg class="ic" viewBox="0 0 16 16"><path d="M3 3h8v12H3z" fill="#fff" stroke="#7a8a99"/><path d="M7 1h5v7H7z" fill="#f0c040" stroke="#a07a10"/><path d="M5 9h4M5 11h4M5 13h4" stroke="#7a8a99"/></svg><span>History</span></div>
            <div class="tab b-git"><svg class="ic" viewBox="0 0 16 16"><path d="M1 9h14v6H1z" fill="#dfe6ef" stroke="#5a7fa8"/><path d="M6 1h4v5h2.500L8 11 3.500 6H6z" fill="#6ab04a" stroke="#3a7a2a" stroke-width=".7"/></svg><span>Git Staging</span></div>
            <div class="tab b-sync"><svg class="ic" viewBox="0 0 16 16"><path d="M2 8h7v7H2z" fill="#fff" stroke="#5a6a7a"/><path d="M9 1h6v9H9z" fill="#f0c040" stroke="#a07a10"/><path d="M2 6l2-3 2 0" stroke="#3a7ac8" fill="none"/></svg><span>Synchronize</span></div>
            <div class="tab b-debug"><svg class="ic"><use href="#bug"/></svg><span>Mule Debugger</span></div>
            <div class="view-ctl ctl-props">
              <svg class="ti"><use href="#save"/></svg>
              <div class="tree-toggle"><svg class="ti" viewBox="0 0 16 16"><path d="M2 1l3 1 2 12h7" fill="none" stroke="#555" stroke-width="1.200"/><path d="M6 5h7M7 10h6" stroke="#555"/><circle cx="13" cy="5" r="1.800" fill="#555"/><circle cx="13" cy="10" r="1.800" fill="#555"/><circle cx="13" cy="14" r="1.800" fill="#555"/></svg></div>
              <div class="btn-min"></div><div class="btn-max"></div>
            </div>
          </div>
          <div class="props-body">
            <nav class="props-nav">
              <div class="nav-item on">General</div>
              <div class="nav-item">Metadata</div>
              <div class="nav-item">Notes</div>
              <div class="nav-item">Help</div>
            </nav>
            <div class="props-form">
              <div class="props-main">
                <div class="no-errors"><svg class="ic"><use href="#check-ok"/></svg><span>There are no errors.</span></div>
                <fieldset class="group">
                  <legend>Set Event</legend>
                  <p class="group-desc">Define the new event that will be output by this operation</p>
                  <div class="opt opt-first"><i class="radio on"></i><span>Start with an empty event</span></div>
                  <div class="opt"><i class="radio"></i><span>Clone the incoming event and override values</span></div>
                  <div class="folder">
                    <div class="folder-tabs">
                      <div class="ftab on">Payload</div>
                      <div class="ftab">Attributes</div>
                      <div class="ftab">Error</div>
                      <div class="ftab">Variables</div>
                    </div>
                    <div class="folder-body">
                      <label class="flabel flabel-top">Value:</label>
                      <div class="code-box">
                        <div class="code">{<br>&nbsp;&nbsp;"number": "12345678"<br>}</div>
                        <div class="code-scroll">
                          <svg class="sb-arrow"><path d="M2 7l4-4 4 4" stroke="#bbb" stroke-width="1.800" fill="none"/></svg>
                          <svg class="sb-arrow sb-end"><path d="M2 3l4 4 4-4" stroke="#bbb" stroke-width="1.800" fill="none"/></svg>
                        </div>
                      </div>
                      <label class="flabel">Media Type:</label>
                      <div class="combo"><span>application/json</span><svg class="chev" viewBox="0 0 10 6"><path d="M1 1l4 4 4-4" fill="none" stroke="#555" stroke-width="1.200"/></svg></div>
                      <label class="flabel">Encoding:</label>
                      <div class="combo"><span>UTF-8</span><svg class="chev" viewBox="0 0 10 6"><path d="M1 1l4 4 4-4" fill="none" stroke="#555" stroke-width="1.200"/></svg></div>
                    </div>
                    <div class="red-mark mark-form"></div>
                  </div>
                </fieldset>
              </div>
              <div class="form-scroll">
                <svg class="sb-arrow"><path d="M2 7l4-4 4 4" stroke="#555" stroke-width="1.800" fill="none"/></svg>
                <div class="sb-thumb sb-thumb-form"></div>
                <svg class="sb-arrow sb-end"><path d="M2 3l4 4 4-4" stroke="#444" stroke-width="1.800" fill="none"/></svg>
              </div>
            </div>
            <aside class="props-side">
              <div class="side-tabs"><div class="ftab on side-in">Input</div><div class="ftab side-out">Output</div></div>
              <div class="filter"><svg class="i-12"><use href="#search"/></svg><span>type filter text</span></div>
              <div class="loading">Loading metadata...</div>
            </aside>
          </div>
        </section>
      </div>
    </div>

    <div class="statusbar">
      <div class="status-btn"><svg class="ti" viewBox="0 0 16 16"><path d="M1 6l4-5 3 3-1 5z" fill="#e8b020"/><circle cx="5" cy="11" r="4" fill="#dfe6ef" stroke="#b09030"/><path d="M8 5h7v8H8z" fill="#6a90c8"/></svg></div>
      <svg class="sdots"><use href="#dots"/></svg>
      <span class="watermark">https://blog.csdn.net/qq_53442144</span>
      <svg class="sdots sdots-end"><use href="#dots"/></svg>
    </div>
  </body>
</html>
```

FILE: styles.css

```css
* {
  box-sizing: border-box;
  margin: 0;
  padding: 0;
}

html,
body {
  height: 1038px;
  overflow: hidden;
}

body {
  background-color: white;
  color: #1d2733;
  font-family: "Noto Sans", "Noto Sans CJK SC", sans-serif;
  font-size: 12.5px;
  display: flex;
  flex-direction: column;
}

.sprite {
  display: none;
}

svg {
  flex: none;
  display: block;
}

em {
  font-style: normal;
  color: #a8916c;
}

span {
  white-space: nowrap;
}

/* window top */
.titlebar {
  height: 22px;
  display: flex;
  align-items: center;
  padding-left: 2px;
  gap: 7px;
  color: #808080;
}

.app-logo {
  width: 14px;
  height: 14px;
}

.win-btns {
  margin-left: auto;
  display: flex;
  gap: 35px;
  padding-right: 11px;
}

.win-btns svg {
  width: 10px;
  height: 10px;
}

.win-btns svg:nth-child(2) {
  margin-right: 6px;
}

.menubar {
  height: 19px;
  display: flex;
  align-items: center;
  gap: 13px;
  padding-left: 7px;
  color: #666;
}

.toolbar {
  height: 31px;
  margin-left: 3px;
  padding-left: 6px;
  background-color: #e8e9eb;
  display: flex;
  align-items: center;
}

.ti {
  width: 16px;
  height: 16px;
  margin-left: 6px;
}

.toolbar > .ti:first-child {
  margin-left: 0;
}

.td {
  width: 8px;
  height: 4px;
  margin-left: 6px;
}

.tdots {
  width: 3px;
  height: 24px;
  margin-left: 6px;
}

.tsep {
  width: 2px;
  height: 24px;
  margin-left: 6px;
  background-color: #8e8e8e;
}

.toolbar .m1 { margin-left: 1px; }
.toolbar .m4 { margin-left: 4px; }
.toolbar .m5 { margin-left: 5px; }
.toolbar .m7 { margin-left: 7px; }
.toolbar .m8 { margin-left: 8px; }
.toolbar .m10 { margin-left: 10px; }

.toolbar-right {
  margin-left: auto;
  padding-right: 3px;
  display: flex;
  align-items: center;
}

.tsep-r {
  margin-left: 6px;
  margin-right: 5px;
}

.persp {
  width: 22px;
  height: 22px;
  display: flex;
  align-items: center;
  justify-content: center;
  border: 1px solid transparent;
}

.persp .ti {
  margin-left: 0;
}

.persp-on {
  background-color: #b8d8f4;
  border-color: #8cc0ee;
}

/* workbench */
.workbench {
  height: 940px;
  margin-left: 3px;
  background-color: #e8e9eb;
  display: flex;
  gap: 7px;
}

.col-left {
  width: 393px;
  display: flex;
  flex-direction: column;
}

.col-main {
  flex: 1;
  min-width: 0;
  display: flex;
  flex-direction: column;
  gap: 7px;
}

.main-top {
  height: 533px;
  display: flex;
  gap: 7px;
}

.view {
  background-color: white;
  display: flex;
  flex-direction: column;
  min-width: 0;
}

.view-pkg {
  height: 479px;
}

.view-munit {
  height: 268px;
  margin-top: 7px;
  border-right: 1px solid #c8c8c8;
}

.view-cov {
  height: 178px;
  margin-top: 8px;
}

.view-editor {
  width: 1134px;
  flex: none;
}

.view-palette {
  flex: 1;
}

.view-props {
  height: 400px;
}

/* tabs */
.tabbar {
  height: 41px;
  flex: none;
  background-color: #e8e9eb;
  display: flex;
}

.tab {
  height: 41px;
  display: flex;
  align-items: center;
  gap: 3px;
  padding-left: 9px;
  padding-bottom: 3px;
  border-top: 3px solid transparent;
}

.tab.active {
  background-color: white;
  border-top-color: #66b7e1;
  padding-right: 11px;
}

.close {
  width: 10px;
  height: 10px;
  margin-left: auto;
}

.ic {
  width: 16px;
  height: 16px;
}

.i-14 {
  width: 15px;
  height: 16px;
}

.i-13 {
  width: 13px;
  height: 16px;
}

.i-12 {
  width: 12px;
  height: 12px;
}

.i-pv {
  width: 12px;
  height: 16px;
}

.tab-pkg { width: 152px; padding-left: 11px; }
.tab-outline { width: 82px; padding-left: 8px; gap: 3px; }
.tab-apikit { width: 128px; padding-left: 8px; gap: 4px; }
.tab-munit { width: 84px; }
.tab-errors { width: 113px; padding-left: 7px; }
.tab-cov { width: 148px; padding-left: 10px; }
.ed-1 { width: 126px; gap: 0; }
.ed-2 { width: 88px; gap: 0; }
.ed-3 { width: 151px; gap: 0; }
.ed-4 { width: 192px; gap: 0; }
.tab-pal { width: 124px; }
.tab-se { width: 105px; margin-right: 9px; }
.b-problems { width: 95px; padding-left: 3px; }
.b-search { width: 80px; padding-left: 3px; }
.b-console { width: 88px; padding-left: 3px; }
.b-progress { width: 93px; padding-left: 3px; }
.b-history { width: 82px; padding-left: 3px; }
.b-git { width: 105px; padding-left: 3px; }
.b-sync { width: 111px; padding-left: 3px; }
.b-debug { padding-left: 3px; }

.api-mini {
  width: 14px;
  font-size: 9px;
  font-weight: 600;
  color: #555;
}

.view-ctl {
  margin-left: auto;
  padding: 5px 7px 0 0;
  display: flex;
  gap: 13px;
}

.view-ctl .ti {
  margin-left: 0;
}

.ctl-low {
  padding-top: 6px;
}

.ctl-pal {
  padding-right: 4px;
}

.ctl-pkg {
  gap: 0;
  padding-top: 3px;
}

.ctl-pkg .ti {
  margin-right: 5px;
  margin-top: 1px;
}

.ctl-pkg .btn-min {
  margin-top: 2px;
}

.ctl-pkg .btn-max {
  margin: 3px 0 0 13px;
}

.tdots-v {
  width: 6px;
  height: 16px;
  margin: 0 15px 0 10px;
}

.ctl-props {
  padding: 0 4px 0 0;
  align-items: flex-start;
  gap: 0;
}

.ctl-props .ti {
  margin-top: 2px;
}

.ctl-props .btn-min {
  margin: 6px 13px 0 11px;
}

.ctl-props .btn-max {
  margin-top: 6px;
}

.tree-toggle {
  width: 23px;
  height: 21px;
  margin-left: 4px;
  background-color: #b8d6f0;
  border: 1px solid #8cc0ee;
  display: flex;
  justify-content: center;
}

.tree-toggle .ti {
  margin-top: 2px;
}

.btn-min {
  width: 10px;
  height: 5px;
  border: 1px solid #666;
  background-color: white;
  margin-top: 1px;
}

.btn-max {
  width: 10px;
  height: 11px;
  border: 1px solid #666;
  border-top-width: 2px;
  margin-top: 1px;
  background-color: white;
}

/* package tree */
.tree-wrap {
  flex: 1;
  display: flex;
  min-height: 0;
}

.tree {
  flex: 1;
  min-width: 0;
  overflow: hidden;
  font-size: 12.3px;
}

.row {
  height: 20px;
  padding-bottom: 2px;
  display: flex;
  align-items: center;
}

.lv0 { padding-left: 3px; }
.lv1 { padding-left: 19px; }
.lv2 { padding-left: 35px; }

.jre-label {
  font-size: 12.1px;
}

.arr {
  width: 10px;
  height: 10px;
  margin-right: 5px;
  flex: none;
  display: block;
}

.row .ic {
  margin-right: 4px;
}

.vscroll {
  width: 15px;
  margin-right: 1px;
  background-color: #f0f0f0;
  display: flex;
  flex-direction: column;
  align-items: center;
}

.sb-arrow {
  width: 12px;
  height: 10px;
  margin-top: 4px;
  flex: none;
}

.sb-end {
  margin-top: auto;
  margin-bottom: 4px;
}

.sb-thumb {
  background-color: #cdcdcd;
  width: 100%;
}

.sb-thumb-tree {
  height: 254px;
  margin-top: 27px;
}

.hscroll {
  height: 16px;
  flex: none;
  background-color: #f0f0f0;
  display: flex;
  align-items: center;
  padding-left: 3px;
}

.sb-h-arrow {
  width: 12px;
  height: 12px;
}

.sb-thumb-h {
  width: 264px;
  height: 16px;
  background-color: #cdcdcd;
}

.sb-h-end {
  margin-left: 84px;
}

/* munit view */
.munit-tools {
  height: 22px;
  flex: none;
  display: flex;
  align-items: center;
  justify-content: flex-end;
  padding-right: 3px;
}

.munit-tools .m9 { margin-left: 9px; }
.munit-tools .m7 { margin-left: 7px; }

.tool-sep {
  width: 1px;
  height: 18px;
  margin-left: 6px;
  background-color: #999;
}

.run-row {
  height: 17px;
  margin-top: 10px;
  padding-left: 8px;
  flex: none;
  display: flex;
  align-items: center;
}

.lbl-run { width: 30px; }
.lbl-err { width: 44px; }
.lbl-fail { width: 52px; }

.run-field {
  height: 17px;
  line-height: 17px;
  padding-left: 6px;
  background-color: #f0f0f0;
}

.f-run { width: 84px; }
.f-err { width: 68px; }
.f-fail { width: 70px; }

.red-sq {
  width: 6px;
  height: 6px;
  margin: 0 5px;
  background-color: #f00;
}

.progress {
  height: 17px;
  flex: none;
  margin: 10px 4px 0 3px;
  border-top: 1px solid #a9a9a9;
  border-left: 1px solid #a9a9a9;
}

.sort-line {
  height: 1px;
  flex: none;
  margin-top: 15px;
  background-color: #bbb;
}

.sort-box {
  height: 28px;
  margin-top: 9px;
  padding: 5px 0 0 6px;
  flex: none;
  border: 1px solid #e2e2e2;
  display: flex;
  align-items: center;
}

.radio {
  width: 13px;
  height: 13px;
  flex: none;
  display: block;
  border: 1px solid #555;
  border-radius: 50%;
  background-color: white;
}

.radio.on {
  background: radial-gradient(circle, #333 0 3.500px, white 4px);
}

.r-first { margin: 0 3px 0 10px; }
.r-second { margin: 0 3px 0 12px; }

/* coverage view */
.show-cov {
  height: 16px;
  flex: none;
  display: flex;
  align-items: center;
  gap: 4px;
  color: #808080;
}

.cb {
  width: 10px;
  height: 10px;
}

.gen-btn {
  height: 25px;
  margin-top: 11px;
  flex: none;
  line-height: 22px;
  text-align: center;
  color: #8d8d8d;
  background-color: #c8c8c8;
  border-top: 1px solid #dcdcdc;
}

.overall {
  height: 36px;
  flex: none;
  line-height: 36px;
}

.cov-box {
  height: 49px;
  flex: none;
  border: 1px solid #85888c;
}

/* editor canvas */
.canvas {
  flex: 1;
  display: flex;
  flex-direction: column;
  padding: 31px 0 14px 8px;
}

.flow {
  border: 1px solid #cfcfcf;
  border-top: 2px solid #17b565;
  position: relative;
  flex: none;
}

.flow-main {
  width: 476px;
  height: 255px;
}

.flow-small {
  margin-top: 15px;
  height: 55px;
}

.flow-get {
  width: 215px;
  margin-top: 16px;
}

.flow-err {
  width: 220px;
}

.flow-title {
  height: 20px;
  padding-bottom: 1px;
  display: flex;
  align-items: center;
  gap: 5px;
  padding-left: 5px;
  font-size: 12.1px;
}

.flow-title.short {
  height: 18px;
  padding-bottom: 3px;
}

.tri {
  width: 8px;
  height: 8px;
}

.flow-dots {
  text-align: center;
  font-weight: 700;
  font-size: 14px;
  letter-spacing: 1px;
  line-height: 14px;
  margin-top: 7px;
  color: #333;
}

.behavior {
  text-align: center;
  line-height: 18px;
  margin-top: 5px;
}

.mocks {
  text-align: center;
  line-height: 18px;
  margin-top: 9px;
  color: #cacaca;
}

.lanes {
  margin-top: 16px;
  display: grid;
  grid-template-columns: 201px 1px 1fr;
}

.lane-name {
  text-align: center;
  line-height: 16px;
}

.lane-divider {
  height: 133px;
  margin-top: 14px;
  border-left: 1px dashed #c4c4c4;
}

.lane-body {
  display: flex;
  align-items: flex-start;
}

.exec {
  padding: 28px 0 0 12px;
}

.valid {
  padding: 10px 0 0 6px;
}

.node {
  width: 75px;
  height: 94px;
  padding-top: 7px;
  border: 1px solid transparent;
  text-align: center;
  flex: none;
}

.node.selected {
  border-color: #17b565;
}

.circle {
  width: 58px;
  height: 58px;
  margin: 0 auto;
}

.node-name {
  margin-top: 5px;
  line-height: 17px;
}

.flow-arrow {
  flex: none;
  height: 10px;
}

.flow-arrow.short {
  width: 31px;
  margin: 32px -2px 0;
}

.flow-arrow.long {
  width: 68px;
  margin: 24px -25px 0 -24px;
}

.node-assert {
  width: 120px;
  flex: none;
  text-align: center;
}

.assert-type {
  margin-top: 6px;
  line-height: 16px;
  color: #c2c2c2;
}

.assert-name {
  margin: 2px auto 0;
  width: 100px;
  line-height: 17px;
}

.red-mark {
  position: absolute;
  border: 5px solid #ed1c24;
  pointer-events: none;
}

.mark-node {
  left: -1px;
  top: 115px;
  width: 107px;
  height: 123px;
}

.mark-form {
  left: -6px;
  top: 39px;
  width: 255px;
  height: 170px;
}

.canvas-tabs {
  margin-top: auto;
  display: flex;
  gap: 9px;
  line-height: 18px;
  color: #a9a9a9;
}

.canvas-tabs .on {
  color: #1d2733;
}

/* palette */
.pal-search {
  height: 27px;
  flex: none;
  padding: 2px 2px 0 2px;
  display: flex;
  align-items: flex-start;
}

.search-box {
  width: 312px;
  height: 23px;
  flex: none;
  border: 1px solid #7a7a7a;
  display: flex;
  align-items: center;
  gap: 2px;
  padding-left: 4px;
  color: #888;
}

.clear {
  margin: 3px 0 0 6px;
  color: #5aa9ec;
}

.gear {
  width: 14px;
  height: 14px;
  margin: 1px 0 0 auto;
}

.pal-lists {
  flex: 1;
  display: flex;
}

.pal-left {
  width: 135px;
  padding-top: 3px;
  border-right: 1px solid #bcbcbc;
  flex: none;
  font-size: 12.2px;
}

.pal-row,
.pal-op {
  height: 21px;
  display: flex;
  align-items: center;
  gap: 2px;
}

.pal-row {
  width: 103px;
  margin-left: 4px;
  padding-left: 1px;
}

.row-ex {
  margin-left: 2px;
  gap: 1px;
}

.row-add {
  height: 21px;
  border-bottom: 2px solid #ececec;
}

.pal-row.sel,
.pal-op.sel {
  background-color: #d8d8d8;
}

.pal-right {
  width: 185px;
  padding-left: 4px;
}

.pal-head {
  height: 21px;
  line-height: 21px;
  margin-left: 16px;
  padding-left: 2px;
  background-color: #f0f0f0;
}

/* properties */
.props-body {
  flex: 1;
  display: flex;
  min-height: 0;
}

.props-nav {
  width: 95px;
  flex: none;
  padding: 21px 0 0 2px;
  border-right: 1px solid #dedede;
}

.nav-item {
  height: 30px;
  line-height: 29px;
  padding-left: 11px;
  border-left: 3px solid transparent;
}

.nav-item.on {
  color: #6db6e0;
  font-weight: 700;
  border-left-color: #6db6e0;
}

.props-form {
  flex: 1;
  display: flex;
  padding-right: 2px;
  min-width: 0;
}

.props-main {
  flex: 1;
  padding: 0 7px 0 5px;
  min-width: 0;
}

.no-errors {
  height: 29px;
  display: flex;
  align-items: center;
  gap: 4px;
  padding: 0 0 3px 3px;
}

.group {
  height: 322px;
  border: 1px solid #dedede;
  padding: 0 6px 0 7px;
  position: relative;
  font-size: 12.35px;
}

.group legend {
  margin-left: -2px;
  padding: 0 3px;
  line-height: 17px;
}

.group-desc {
  line-height: 18px;
  padding-top: 5px;
  height: 24px;
}

.opt {
  height: 22px;
  padding-left: 20px;
  display: flex;
  align-items: center;
  gap: 3px;
}

.opt-first {
  margin-top: 11px;
}

.folder {
  margin-top: 13px;
  position: relative;
}

.folder-tabs,
.side-tabs {
  height: 41px;
  background-color: #e8e9eb;
  display: flex;
}

.ftab {
  height: 41px;
  padding: 0 10px;
  border-top: 3px solid transparent;
  line-height: 35px;
  white-space: nowrap;
}

.ftab.on {
  background-color: white;
  border-top-color: #66b7e1;
  margin-right: 3px;
}

.folder-body {
  height: 163px;
  padding: 5px 5px 0 5px;
  border: 1px solid #e2e2e2;
  border-top: none;
  display: grid;
  grid-template-columns: 89px 1fr;
  grid-template-rows: 93px 25px 25px;
  row-gap: 5px;
  align-items: center;
}

.flabel-top {
  align-self: start;
  padding-top: 1px;
}

.code-box {
  height: 93px;
  border: 1px solid #ababab;
  display: flex;
}

.code {
  flex: 1;
  padding: 2px 0 0 3px;
  line-height: 17px;
}

.code-scroll {
  width: 16px;
  background-color: #f0f0f0;
  display: flex;
  flex-direction: column;
  align-items: center;
  margin: 1px 1px 1px 0;
}

.combo {
  height: 25px;
  padding: 0 4px 0 3px;
  border: 1px solid #777;
  display: flex;
  align-items: center;
  justify-content: space-between;
}

.chev {
  width: 10px;
  height: 6px;
  margin-right: 0;
}

.form-scroll {
  width: 15px;
  flex: none;
  margin: 25px 0 2px;
  background-color: #f0f0f0;
  display: flex;
  flex-direction: column;
  align-items: center;
}

.sb-thumb-form {
  height: 255px;
  margin-top: 47px;
}

.props-side {
  width: 299px;
  flex: none;
  padding-top: 3px;
  border-left: 1px solid #e2e2e2;
  border-bottom: 1px solid #e2e2e2;
  margin-bottom: 2px;
}

.side-in {
  width: 49px;
  padding: 0 9px;
}

.ftab.side-out {
  padding-left: 9px;
}

.filter {
  width: 272px;
  height: 23px;
  margin: 0 0 0 21px;
  padding-left: 4px;
  border: 1px solid #7a7a7a;
  display: flex;
  align-items: center;
  gap: 2px;
  color: #777;
}

.loading {
  margin: 5px 0 0 21px;
  line-height: 18px;
}

/* bottom */
.statusbar {
  height: 26px;
  margin-left: 3px;
  padding-left: 1574px;
  background-color: #e8e9eb;
  display: flex;
  align-items: center;
}

.status-btn {
  width: 29px;
  height: 23px;
  border-right: 1px solid #b5b5b5;
  border-bottom: 1px solid #b5b5b5;
  background-color: #f1f2f3;
  display: flex;
  align-items: center;
  justify-content: center;
}

.status-btn .ti {
  margin: 0;
}

.sdots {
  width: 3px;
  height: 24px;
  margin-left: 2px;
}

.sdots-end {
  margin-left: -12px;
}

.watermark {
  margin-left: 50px;
  font-family: "Liberation Sans", sans-serif;
  font-size: 16px;
  line-height: 20px;
  margin-top: -8px;
  color: rgba(255, 255, 255, 0.85);
  text-shadow: 1px 1px 1px #c8c8c8;
}
```
